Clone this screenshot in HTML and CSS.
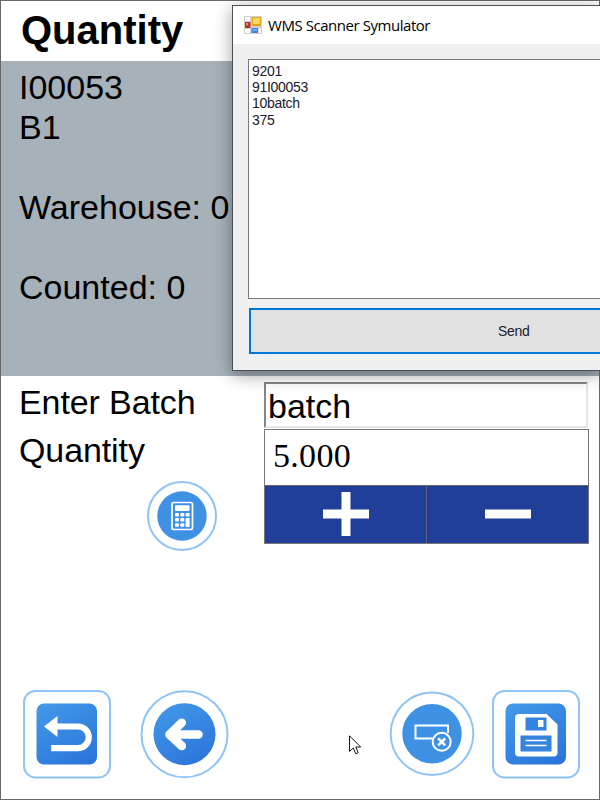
FILE: index.html
```
<!DOCTYPE html>
<html lang="en">
<head>
<meta charset="utf-8">
<title>Quantity</title>
<link rel="stylesheet" href="styles.css">
</head>
<body>
<main class="app">
  <header class="app-header"><h1>Quantity</h1></header>
  <section class="info">
    <p>I00053</p>
    <p>B1</p>
    <p class="spaced">Warehouse: 0</p>
    <p class="spaced">Counted: 0</p>
  </section>
  <section class="form">
    <div class="labels">
      <div class="label">Enter Batch</div>
      <div class="label label-quantity">Quantity</div>
      <svg class="calculator" width="72" height="72" viewBox="0 0 72 72">
        <circle cx="36" cy="36" r="34" fill="#fff" stroke="#8fc4f6" stroke-width="2"/>
        <circle cx="36" cy="36" r="24.7" fill="#3f91e4"/>
        <rect x="26" y="22.5" width="20.5" height="27" rx="2" fill="none" stroke="#fff" stroke-width="1.7"/>
        <rect x="29" y="25.3" width="14.5" height="5.8" rx="1" fill="#fff"/>
        <g fill="#fff"><rect x="29" y="33" width="4" height="3.6" rx="1"/><rect x="34.3" y="33" width="4" height="3.6" rx="1"/><rect x="39.6" y="33" width="4" height="3.6" rx="1"/><rect x="29" y="38" width="4" height="3.6" rx="1"/><rect x="34.3" y="38" width="4" height="3.6" rx="1"/><rect x="39.6" y="38" width="4" height="9" rx="1"/><rect x="29" y="43.2" width="4" height="3.6" rx="1"/><rect x="34.3" y="43.2" width="4" height="3.6" rx="1"/></g>
      </svg>
    </div>
    <div class="fields">
      <div class="batch-input">batch</div>
      <div class="stepper">
        <div class="stepper-value">5.000</div>
        <div class="stepper-buttons">
          <div class="step"><svg width="46" height="46" viewBox="0 0 46 46"><path d="M0 23H46M23 1V45" stroke="#fff" stroke-width="9"/></svg></div>
          <div class="step"><svg width="46" height="46" viewBox="0 0 46 46"><path d="M0 23H46" stroke="#fff" stroke-width="9"/></svg></div>
        </div>
      </div>
    </div>
  </section>
  <footer class="toolbar">
    <svg width="88" height="89" viewBox="0 0 88 89">
      <defs><linearGradient id="blue" x1="0.2" y1="0" x2="0.8" y2="1"><stop offset="0" stop-color="#4197e8"/><stop offset="1" stop-color="#2b75da"/></linearGradient></defs>
      <rect x="1" y="1" width="86" height="86.500" rx="11.500" fill="#fff" stroke="#8fc4f6" stroke-width="2"/>
      <rect x="13.500" y="13.500" width="60.500" height="61" rx="7.500" fill="url(#blue)"/>
      <path d="M32 36.500H55a10.800 10.800 0 0 1 0 21.600H28.200" fill="none" stroke="#fff" stroke-width="6.200"/>
      <path d="M21 36.500L34.500 26V47Z" fill="#fff"/>
    </svg>
    <svg width="90" height="89" viewBox="0 0 90 89">
      <circle cx="44.500" cy="44.200" r="43" fill="#fff" stroke="#8fc4f6" stroke-width="2"/>
      <circle cx="44.500" cy="44.200" r="31" fill="url(#blue)"/>
      <path d="M30 44.500H58.500M41.800 32.700L29.500 44.500L41.800 56" fill="none" stroke="#fff" stroke-width="8.600" stroke-linecap="round" stroke-linejoin="round"/>
    </svg>
    <svg class="clear" width="86" height="89" viewBox="0 0 86 89">
      <circle cx="43" cy="43.700" r="41.300" fill="#fff" stroke="#8fc4f6" stroke-width="2"/>
      <circle cx="43" cy="43.700" r="29.700" fill="#3f91e4"/>
      <path d="M43.500 48.500H26.500V35.500H59V43" fill="none" stroke="#fff" stroke-width="2"/>
      <circle cx="52.700" cy="51.800" r="9" fill="#3f91e4" stroke="#fff" stroke-width="2"/>
      <path d="M49.200 48.300L56.200 55.300M56.200 48.300L49.200 55.300" stroke="#fff" stroke-width="2.600"/>
    </svg>
    <svg width="88" height="89" viewBox="0 0 88 89">
      <rect x="1" y="1" width="86" height="86.500" rx="11.500" fill="#fff" stroke="#8fc4f6" stroke-width="2"/>
      <rect x="13.500" y="13.500" width="60.500" height="61" rx="7.500" fill="url(#blue)"/>
      <path d="M27 24H54.500L65.500 34.500V62.500a4 4 0 0 1-4 4H27a4 4 0 0 1-4-4V28a4 4 0 0 1 4-4Z" fill="#fff"/>
      <path d="M33.500 27.500H54.500V40.500H33.500ZM28.500 45.500H59.500V61.500H28.500Z" fill="#3583df"/>
      <path d="M46 30H51.500V37H46Z" fill="#fff"/>
      <path d="M33.500 50.500H54.500M33.500 55.500H54.500" stroke="#fff" stroke-width="1.500"/>
    </svg>
  </footer>
</main>

<section class="dialog">
  <div class="titlebar">
    <svg width="18" height="18" viewBox="0 0 18 18">
      <rect width="18" height="18" fill="#d2d0cf"/>
      <path d="M1 1H6V5H1ZM1 13H6V17H1ZM14.500 12.500H17V17H14.500Z" fill="#fff"/>
      <rect x="1" y="6" width="5.500" height="6" fill="#b93225"/><rect x="2.200" y="7" width="2" height="2.500" fill="#ef8d78"/>
      <rect x="8" y="1" width="9" height="9" fill="#dda51c"/><rect x="9" y="2" width="7" height="6" fill="#fbd85c"/>
      <rect x="7.500" y="12" width="6.500" height="5" fill="#3f7fdf"/><rect x="8.500" y="13" width="4.500" height="2" fill="#79aaf2"/>
    </svg>
    <span>WMS Scanner Symulator</span>
  </div>
  <div class="dialog-body">
    <div class="textbox">
      <div>9201</div>
      <div>91I00053</div>
      <div>10batch</div>
      <div>375</div>
    </div>
    <div class="send"><span>Send</span></div>
  </div>
</section>

<svg class="cursor" width="13" height="20" viewBox="0 0 13 20">
  <path d="M.5 .800V16.500L4.200 13L6.800 18.800L9.200 17.700L6.800 12H11.700Z" fill="#fff" stroke="#15151f" stroke-width="1"/>
</svg>
</body>
</html>
```
FILE: styles.css
```
* { box-sizing: border-box; }
body {
  margin: 0;
  width: 600px;
  height: 800px;
  position: relative;
  overflow: hidden;
  background: #fff;
  color: #000;
  font-family: "Liberation Sans", Arial, sans-serif;
}
.app {
  height: 800px;
  display: flex;
  flex-direction: column;
  border: 1px solid #6a6768;
}
.app-header { height: 60px; padding-left: 20px; }
h1 { margin: 0; font-size: 40px; line-height: 58px; }
.info {
  height: 315px;
  padding: 6px 0 0 18px;
  background: #a7b1b9;
  font-size: 34px;
  line-height: 40px;
}
.info p { margin: 0; }
.info .spaced { margin-top: 40px; }
.form { display: flex; height: 310px; padding-top: 6px; }
.labels {
  width: 263px;
  padding-left: 18px;
  display: flex;
  flex-direction: column;
  font-size: 34px;
}
.label { line-height: 40px; letter-spacing: -.1px; }
.label-quantity { margin-top: 8px; }
.calculator { margin: 10px 0 0 127px; }
.fields { width: 325px; }
.batch-input {
  width: 324px;
  height: 46px;
  padding-left: 2px;
  border: 2px solid #e6e6e6;
  border-top-color: #858585;
  border-left-color: #858585;
  font-size: 34px;
  line-height: 45px;
}
.stepper { margin-top: 1px; height: 115px; border: 1px solid #777; }
.stepper-value {
  height: 55px;
  padding-left: 8px;
  font-family: "Liberation Serif", "Times New Roman", serif;
  font-size: 34px;
  line-height: 52px;
  letter-spacing: .3px;
}
.stepper-buttons {
  display: flex;
  height: 58px;
  border-top: 1px solid #666;
  background: #213f99;
}
.step { flex: 1; display: flex; justify-content: center; padding-top: 5px; }
.step + .step { border-left: 1px solid #5e6275; }
.toolbar { display: flex; margin-top: 4px; padding-left: 22px; }
.toolbar svg + svg { margin-left: 29px; }
.toolbar svg.clear { margin-left: 159px; }
.toolbar svg.clear + svg { margin-left: 17px; }
.dialog {
  position: absolute;
  left: 232px;
  top: 5px;
  width: 368px;
  height: 366px;
  border: 1px solid #4c4f51;
  border-right: 0;
  background: #f0f0f0;
  box-shadow: 0 4px 16px rgba(0, 0, 0, .38);
}
.titlebar {
  display: flex;
  align-items: center;
  gap: 6px;
  height: 38px;
  padding: 0 0 1px 11px;
  background: #fff;
  font: 15px "Open Sans", "Noto Sans", sans-serif;
  letter-spacing: -.45px;
}
.dialog-body { padding: 15px 0 15px 15px; }
.textbox {
  height: 240px;
  padding: 3px 3px;
  border: 1px solid #7a7a7a;
  border-right: 0;
  background: #fff;
  color: #20202a;
  font-size: 14px;
  line-height: 16.2px;
  letter-spacing: -.3px;
}
.send {
  height: 46px;
  margin: 9px 0 0 1px;
  padding-left: 247px;
  border: 2px solid #0078d7;
  border-right: 0;
  background: #e1e1e1;
  color: #20202a;
  font-size: 14px;
  line-height: 42px;
  letter-spacing: -.3px;
}
.cursor { position: absolute; left: 349px; top: 735px; }
```
